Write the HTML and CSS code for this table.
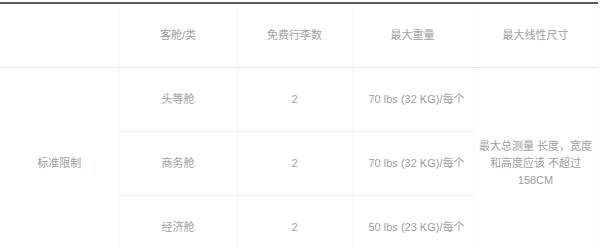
FILE: index.html
```html
<!DOCTYPE html>
<html lang="zh">
<head>
<meta charset="utf-8">
<title>行李限制</title>
<link rel="stylesheet" href="styles.css">
</head>
<body>
<div class="wrap">
  <table class="baggage">
    <colgroup>
      <col class="c1"><col class="c2"><col class="c3"><col class="c4"><col class="c5">
    </colgroup>
    <thead>
      <tr>
        <th></th>
        <th>客舱/类</th>
        <th>免费行李数</th>
        <th>最大重量</th>
        <th>最大线性尺寸</th>
      </tr>
    </thead>
    <tbody>
      <tr>
        <td rowspan="3" class="group">标准限制</td>
        <td>头等舱</td>
        <td>2</td>
        <td class="weight">70 lbs (32 KG)/每个</td>
        <td rowspan="3" class="dims">最大总测量 长度，宽度和高度应该 不超过 158CM</td>
      </tr>
      <tr>
        <td>商务舱</td>
        <td>2</td>
        <td class="weight">70 lbs (32 KG)/每个</td>
      </tr>
      <tr>
        <td>经济舱</td>
        <td>2</td>
        <td class="weight">50 lbs (23 KG)/每个</td>
      </tr>
    </tbody>
  </table>
</div>
</body>
</html>
```
FILE: styles.css
```css
html, body {
  margin: 0;
  padding: 0;
  background: #ffffff;
}
body {
  font-family: "Liberation Sans", "Noto Sans CJK SC", Arial, sans-serif;
  font-size: 11px;
  color: #a0a0a3;
}
.wrap {
  width: 598px;
  margin-top: 2px;
  border-top: 2px solid #5c5c63;
}
.baggage {
  width: 598px;
  border-collapse: collapse;
  table-layout: fixed;
}
.c1 { width: 119px; }
.c2 { width: 118px; }
.c3 { width: 115px; }
.c4 { width: 121px; }
.c5 { width: 125px; }
.baggage th,
.baggage td {
  height: 63px;
  padding: 0 10px;
  text-align: center;
  vertical-align: middle;
  font-weight: normal;
  border: 1px solid #f6f7f9;
  line-height: 17px;
}
.baggage thead th {
  border-top: none;
  border-bottom: 1px solid #e9ebf1;
}
.baggage tbody tr td {
  border-bottom: 1px solid #eef0f4;
}
.baggage th:first-child,
.baggage td.group {
  border-left: none;
}
.baggage td.weight {
  white-space: nowrap;
  overflow: hidden;
  padding: 0 6px 0 14px;
}
.baggage td.dims {
  padding: 0 4px;
  border-bottom: none;
}
.baggage td.group {
  border-bottom: none;
}
```
